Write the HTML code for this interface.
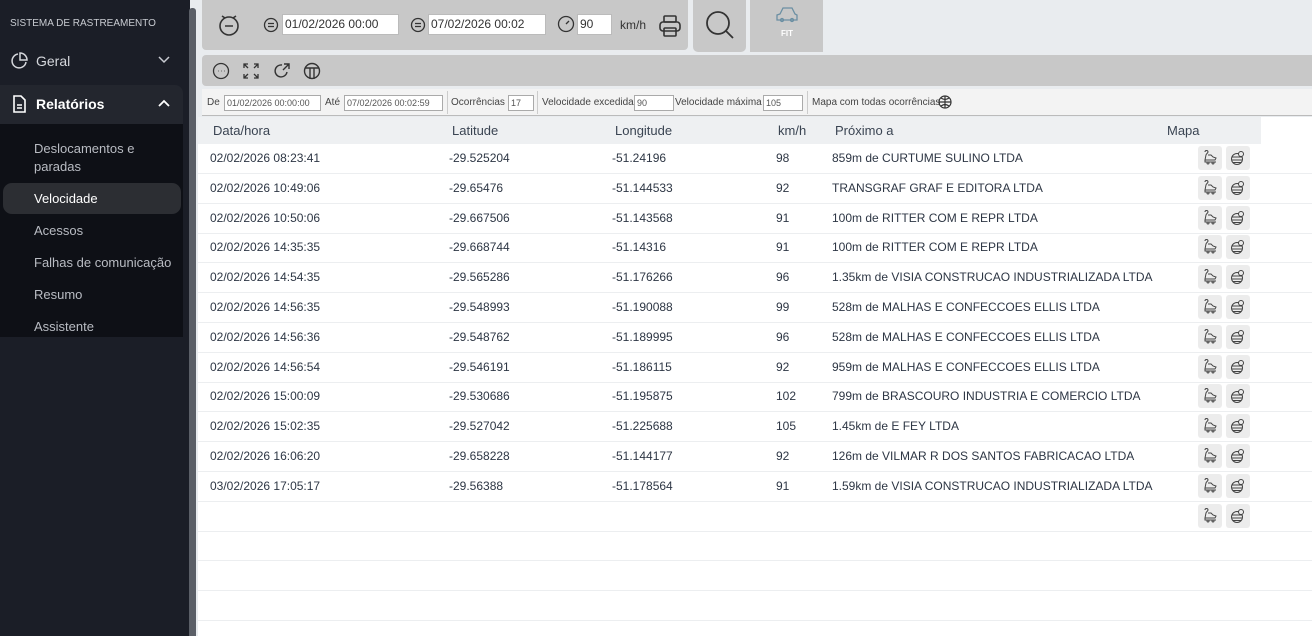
<!DOCTYPE html>
<html><head><meta charset="utf-8"><style>
*{box-sizing:border-box;margin:0;padding:0}
body{width:1312px;height:636px;overflow:hidden;font-family:"Liberation Sans",sans-serif;background:#e9ecef;position:relative}
.sb{position:absolute;left:0;top:0;width:190px;height:636px;background:#1b1e27}
.scr{position:absolute;left:189px;top:8px;width:7px;height:628px;background:#5b5f67;border-radius:3px 3px 0 0}
.sb .t{position:absolute;left:10px;top:18px;font-size:10px;color:#c9ccd2}
.mi{position:absolute;left:0;width:183px;height:38px;color:#d5d7dc;font-size:14px;display:flex;align-items:center;padding-left:36px}
.sub{position:absolute;left:0;top:124px;width:183px;height:213px;background:#0e1016}
.si{position:absolute;left:34px;color:#b9bcc3;font-size:13px;line-height:18px}
.sel{position:absolute;left:3px;top:183px;width:178px;height:31px;background:#2c2e33;border-radius:9px}
.main{position:absolute;left:198px;top:0;width:1114px;height:636px}
.bar{position:absolute;background:#c8c8c8}
.inp{position:absolute;background:#fff;border:1px solid #bbb;font-size:12px;color:#333;height:21px;line-height:19px;padding-left:2px}
.fr{position:absolute;left:4px;top:89px;width:1110px;height:27px;background:#f3f3f3;border-bottom:1px solid #bbb;font-size:10px;color:#444}
.fr span{position:absolute;top:8px}
.fi{position:absolute;top:6px;height:16px;background:#fff;border:1px solid #aaa;font-size:9px;color:#555;line-height:14px;padding-left:2px}
.sep{position:absolute;top:2px;width:1px;height:23px;background:#ccc}
.tbl{position:absolute;left:0;top:117px;width:1114px;height:519px;background:#fff}
.th{position:absolute;left:0;top:0;width:1063px;height:27px;background:#eef0f2;font-size:13px;color:#3a4452}
.th span{position:absolute;top:6px}
.row{position:absolute;left:0;width:1114px;height:30px;border-bottom:1px solid #eceef0;font-size:12px;color:#2d3644}
.row span{position:absolute;top:7px}
.b{position:absolute;top:2px;width:24px;height:24px;background:#ececec;border-radius:3px}
</style></head><body>
<div class="sb">
<div class="t">SISTEMA DE RASTREAMENTO</div>
<div class="mi" style="top:42px">Geral</div>
<svg style="position:absolute;left:10px;top:52px" width="18" height="18" viewBox="0 0 18 18" fill="none" stroke="#d5d7dc" stroke-width="1.5"><path d="M8 2a7 7 0 1 0 8 8"/><path d="M10 1v7h7a7 7 0 0 0-7-7z"/></svg>
<svg style="position:absolute;left:158px;top:56px" width="12" height="8"><path d="M1 1l5 5 5-5" stroke="#c9ccd2" stroke-width="1.5" fill="none"/></svg>
<div style="position:absolute;left:0;top:85px;width:183px;height:39px;background:#23262e;border-radius:0 8px 0 0"></div>
<div class="mi" style="top:85px;font-weight:bold;color:#fff">Relatórios</div>
<svg style="position:absolute;left:12px;top:95px" width="15" height="18" viewBox="0 0 15 18" fill="none" stroke="#fff" stroke-width="1.6"><path d="M2 1h7l4 4v12H2z"/><path d="M5 10h5M5 13h5"/></svg>
<svg style="position:absolute;left:158px;top:99px" width="12" height="8"><path d="M1 7l5-5 5 5" stroke="#fff" stroke-width="1.8" fill="none"/></svg>
<div class="sub"></div>
<div class="sel"></div>
<div class="si" style="top:140px">Deslocamentos e<br>paradas</div>
<div class="si" style="top:190px;color:#fff">Velocidade</div>
<div class="si" style="top:222px">Acessos</div>
<div class="si" style="top:254px">Falhas de comunicação</div>
<div class="si" style="top:286px">Resumo</div>
<div class="si" style="top:318px">Assistente</div>
</div>
<div class="scr"></div>
<div class="main">
<div class="bar" style="left:4px;top:0;width:486px;height:50px;border-radius:0 0 4px 4px"></div>
<svg style="position:absolute;left:20px;top:13px" width="22" height="24" viewBox="0 0 22 24" fill="none" stroke="#333" stroke-width="1.6"><circle cx="11" cy="13" r="9"/><path d="M7 13h8M4 3l3 2M18 3l-3 2"/></svg>
<svg style="position:absolute;left:65px;top:17px" width="16" height="16" fill="none" stroke="#333" stroke-width="1.3"><circle cx="8" cy="8" r="6.5"/><path d="M5 6.5h6M5 9.5h6"/></svg>
<div class="inp" style="left:84px;top:14px;width:117px">01/02/2026 00:00</div>
<svg style="position:absolute;left:212px;top:17px" width="16" height="16" fill="none" stroke="#333" stroke-width="1.3"><circle cx="8" cy="8" r="6.5"/><path d="M5 6.5h6M5 9.5h6"/></svg>
<div class="inp" style="left:230px;top:14px;width:118px">07/02/2026 00:02</div>
<svg style="position:absolute;left:359px;top:15px" width="18" height="18" fill="none" stroke="#333" stroke-width="1.3"><circle cx="9" cy="9" r="7.5"/><path d="M9 9l3-3"/></svg>
<div class="inp" style="left:379px;top:14px;width:35px">90</div>
<div style="position:absolute;left:422px;top:18px;font-size:12px;color:#333">km/h</div>
<svg style="position:absolute;left:460px;top:14px" width="24" height="24" fill="none" stroke="#333" stroke-width="1.6"><rect x="6" y="2" width="12" height="6" rx="1"/><rect x="2" y="8" width="20" height="9" rx="3"/><rect x="6" y="14" width="12" height="8" rx="1"/></svg>
<div class="bar" style="left:495px;top:0;width:53px;height:52px;border-radius:0 0 5px 5px"></div>
<svg style="position:absolute;left:506px;top:9px" width="32" height="32" fill="none" stroke="#333" stroke-width="1.8"><circle cx="14" cy="14" r="11"/><path d="M22 22l7 7"/></svg>
<div class="bar" style="left:552px;top:0;width:73px;height:52px"></div>
<svg style="position:absolute;left:577px;top:6px" width="24" height="18" fill="none" stroke="#6b8fa3" stroke-width="1.3"><path d="M2 14V9l3-1 3-6h9l3 6 2 1v5z"/><circle cx="7" cy="14" r="1.5"/><circle cx="17" cy="14" r="1.5"/></svg>
<div style="position:absolute;left:583px;top:29px;font-size:8px;color:#fff;font-weight:bold">FIT</div>
<div class="bar" style="left:4px;top:55px;width:1110px;height:31px;border-radius:4px 0 0 4px"></div>
<svg style="position:absolute;left:14px;top:62px" width="18" height="18" fill="none" stroke="#333" stroke-width="1.3"><circle cx="9" cy="9" r="7.5"/><path d="M6 9h.5M9 9h.5M12 9h.5"/></svg>
<svg style="position:absolute;left:44px;top:62px" width="18" height="18" fill="none" stroke="#333" stroke-width="1.3"><path d="M2 6V2h4M2 2l4 4M16 6V2h-4M16 2l-4 4M2 12v4h4M2 16l4-4M16 12v4h-4M16 16l-4-4"/></svg>
<svg style="position:absolute;left:75px;top:62px" width="18" height="18" fill="none" stroke="#333" stroke-width="1.4"><path d="M14 10a6 6 0 1 1-5-7"/><path d="M11 2h5v5M16 2l-6 6"/></svg>
<svg style="position:absolute;left:105px;top:62px" width="18" height="18" fill="none" stroke="#333" stroke-width="1.4"><circle cx="9" cy="9" r="7.5"/><path d="M2 6h14M7 6v11M11 6v11"/></svg>
<div class="fr">
<span style="left:5px">De</span><div class="fi" style="left:22px;width:97px">01/02/2026 00:00:00</div>
<span style="left:123px">Até</span><div class="fi" style="left:142px;width:99px">07/02/2026 00:02:59</div>
<div class="sep" style="left:245px"></div>
<span style="left:249px">Ocorrências</span><div class="fi" style="left:306px;width:26px">17</div>
<div class="sep" style="left:335px"></div>
<span style="left:340px">Velocidade excedida</span><div class="fi" style="left:432px;width:40px">90</div>
<span style="left:473px">Velocidade máxima</span><div class="fi" style="left:561px;width:40px">105</div>
<div class="sep" style="left:605px"></div>
<span style="left:610px">Mapa com todas ocorrências</span>
<svg style="position:absolute;left:736px;top:5px" width="15" height="15" fill="none" stroke="#333" stroke-width="1.2"><circle cx="7" cy="8" r="6"/><path d="M1 8h12M7 2v12M3 4c3 2 5 2 8 0M3 12c3-2 5-2 8 0"/></svg>
</div>
<div class="tbl">
<div class="th"><span style="left:15px">Data/hora</span><span style="left:254px">Latitude</span><span style="left:417px">Longitude</span><span style="left:580px">km/h</span><span style="left:637px">Próximo a</span><span style="left:969px">Mapa</span></div>
</div>
</div>
<div id="rows"></div>
<script>
var d=[["02/02/2026 08:23:41","-29.525204","-51.24196","98","859m de CURTUME SULINO LTDA"],
["02/02/2026 10:49:06","-29.65476","-51.144533","92","TRANSGRAF GRAF E EDITORA LTDA"],
["02/02/2026 10:50:06","-29.667506","-51.143568","91","100m de RITTER COM E REPR LTDA"],
["02/02/2026 14:35:35","-29.668744","-51.14316","91","100m de RITTER COM E REPR LTDA"],
["02/02/2026 14:54:35","-29.565286","-51.176266","96","1.35km de VISIA CONSTRUCAO INDUSTRIALIZADA LTDA"],
["02/02/2026 14:56:35","-29.548993","-51.190088","99","528m de MALHAS E CONFECCOES ELLIS LTDA"],
["02/02/2026 14:56:36","-29.548762","-51.189995","96","528m de MALHAS E CONFECCOES ELLIS LTDA"],
["02/02/2026 14:56:54","-29.546191","-51.186115","92","959m de MALHAS E CONFECCOES ELLIS LTDA"],
["02/02/2026 15:00:09","-29.530686","-51.195875","102","799m de BRASCOURO INDUSTRIA E COMERCIO LTDA"],
["02/02/2026 15:02:35","-29.527042","-51.225688","105","1.45km de E FEY LTDA"],
["02/02/2026 16:06:20","-29.658228","-51.144177","92","126m de VILMAR R DOS SANTOS FABRICACAO LTDA"],
["03/02/2026 17:05:17","-29.56388","-51.178564","91","1.59km de VISIA CONSTRUCAO INDUSTRIALIZADA LTDA"],
["","","","",""],["","","","",""],["","","","",""],["","","","",""]];
var car='<svg width="24" height="24" viewBox="0 0 24 24" fill="none" stroke="#444" stroke-width="1"><path d="M7 6c0-2 3-2 3 0 0 1-2 2-2 3l-1 5h10l1-2-3-1-2-2h-3M7 14v2h11"/><circle cx="10" cy="17" r="1"/><circle cx="15" cy="17" r="1"/></svg>';
var glb='<svg width="24" height="24" viewBox="0 0 24 24" fill="none" stroke="#444" stroke-width="1"><circle cx="11" cy="13" r="5.5"/><path d="M6 11h10M6 14h10M7 16.5h8"/><circle cx="15" cy="8" r="2.5" fill="#ececec"/></svg>';
var h='',L=[198+12,198+251,198+414,198+578,198+634];
d.forEach(function(r,i){var y=Math.round(144+i*29.8);h+='<div class="row" style="top:'+y+'px;left:198px">';
r.forEach(function(c,j){h+='<span style="left:'+(L[j]-198)+'px">'+c+'</span>'});
if(i<13)h+='<div class="b" style="left:1000px">'+car+'</div><div class="b" style="left:1028px">'+glb+'</div>';
h+='</div>'});
document.getElementById('rows').innerHTML=h;
</script>
</body></html>
